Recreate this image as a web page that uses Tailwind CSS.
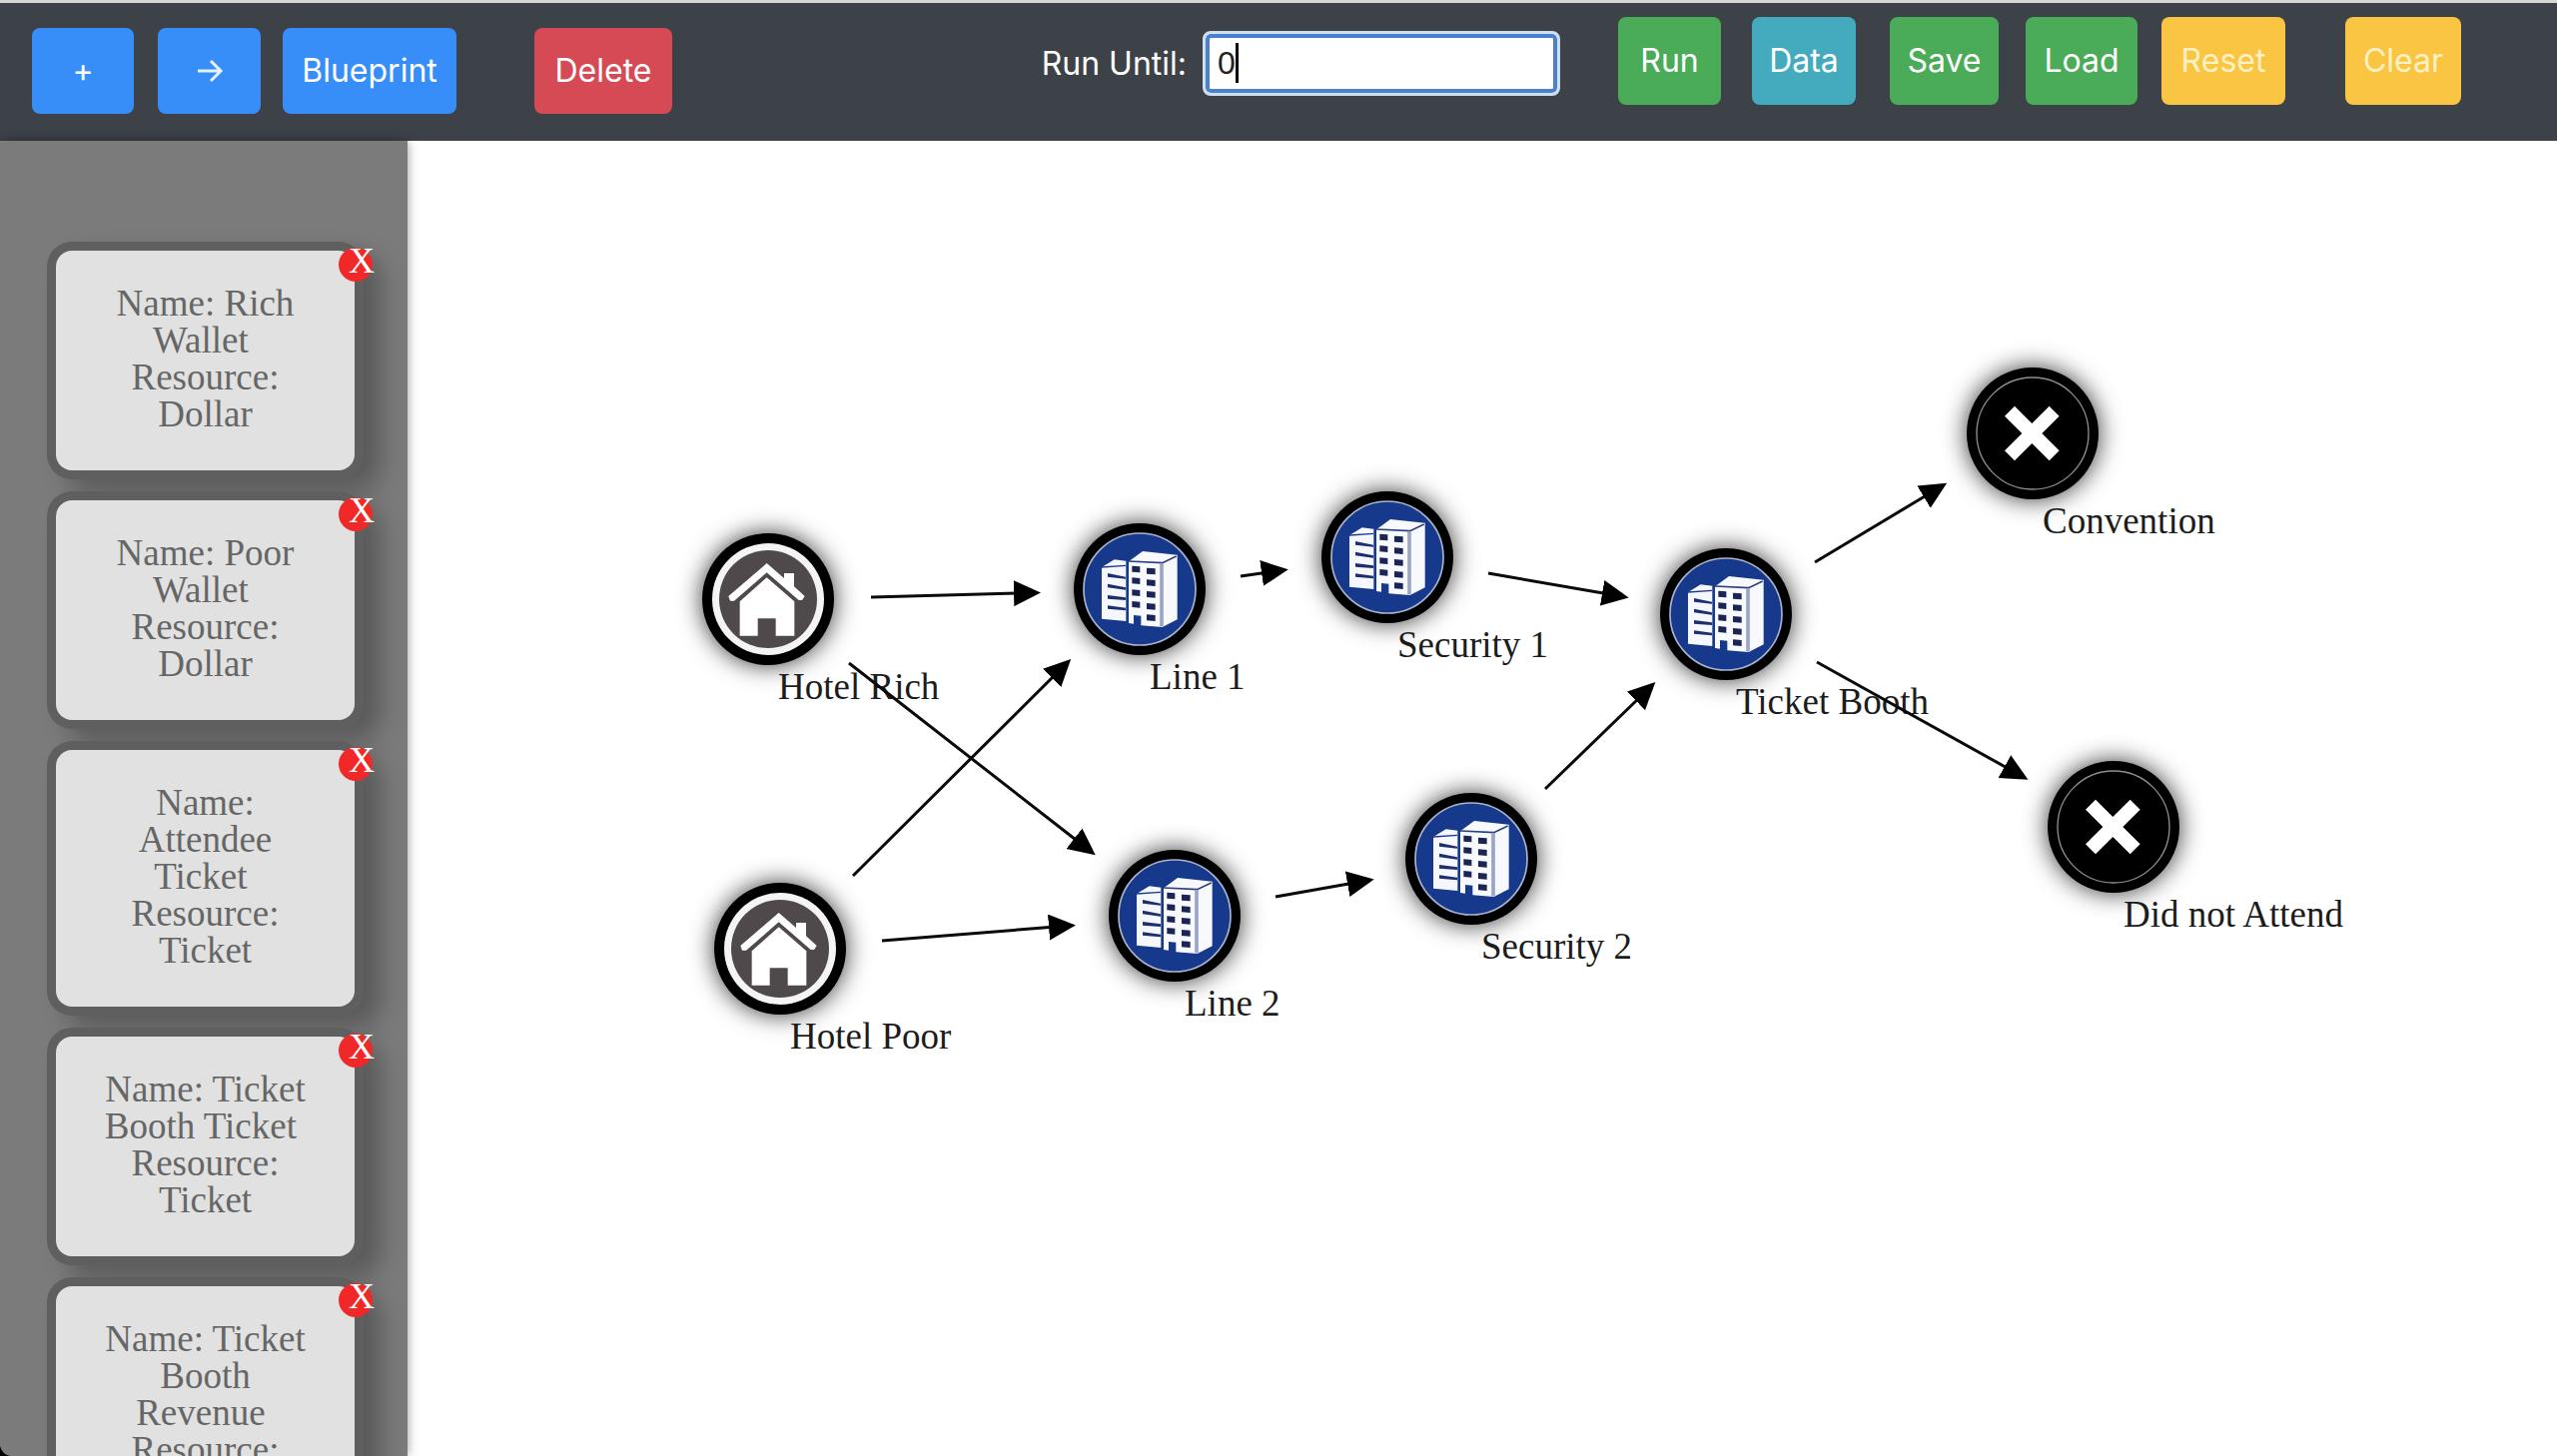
<!DOCTYPE html>
<html lang="en">
<head>
<meta charset="utf-8">
<title>Simulation Builder</title>
<script src="https://cdn.jsdelivr.net/npm/@tailwindcss/browser@4"></script>
</head>
<body class="relative flex h-screen flex-col overflow-hidden bg-white">
<svg class="hidden" aria-hidden="true">
  <symbol id="house" viewBox="0 0 396 396">
    <circle cx="198" cy="198" r="168" fill="#f4f4f4"/>
    <circle cx="198" cy="198" r="147" fill="#4f494b"/>
    <path d="M79 189L194 90L246 135V120H276V160L308 189L300 201L290 201L194 118L96 203L84 203Z" fill="#fff"/>
    <path d="M113 205L194 133L277 205V308H221V256H167V308H113Z" fill="#fff"/>
  </symbol>
  <symbol id="office" viewBox="0 0 396 396">
    <circle cx="198" cy="198" r="168" fill="#16398c" stroke="#a9b4cf" stroke-width="5"/>
    <path d="M84 132L122 109L157 113V294L84 287Z" fill="#f6f7fc"/>
    <path d="M84 132L156 127" stroke="#16398c" stroke-width="4"/>
    <path d="M102 150L156 161V167L102 161ZM102 182L156 193V200L102 193ZM102 216L156 223V231L102 227ZM102 247L156 254V262L102 257Z" fill="#1b2f70"/>
    <path d="M165 115L207 84L311 95V289L266 312L202 307V278L180 276V302L165 300Z" fill="#f8f9fd"/>
    <path d="M165 114L266 119L308 99" fill="none" stroke="#2d3f7d" stroke-width="5"/>
    <path d="M264 120V310" stroke="#9ba4c8" stroke-width="11"/>
    <path d="M175 128l24 2v18l-24-2zM175 163l24 2v18l-24-2zM175 199l24 2v18l-24-2zM175 234l24 2v18l-24-2zM219 134l26 2v18l-26-2zM219 169l26 2v18l-26-2zM219 204l26 2v18l-26-2zM219 240l26 2v18l-26-2zM219 274l26 2v18l-26-2z" fill="#1b2555"/>
  </symbol>
  <symbol id="cross" viewBox="0 0 396 396">
    <circle cx="198" cy="198" r="168" fill="#000" stroke="#8f8f8f" stroke-width="4"/>
    <path d="M144 116L196 168L248 116L278 146L226 198L278 250L248 280L196 228L144 280L114 250L166 198L114 146Z" fill="#fff"/>
  </symbol>
</svg>

<header class="flex h-[141px] shrink-0 items-start border-t-3 border-[#d6d6d6] bg-[#3d4249] pr-24 pl-8 font-['Inter',sans-serif] text-[32px] leading-10 text-white">
  <div class="mt-[25px] flex">
    <button class="h-[86px] w-[102px] rounded-lg bg-[#378ef8]" aria-label="Add node">+</button>
    <button class="ml-6 flex h-[86px] w-[103px] items-center justify-center rounded-lg bg-[#378ef8]" aria-label="Add arrow">
      <svg class="h-6 w-7" viewBox="0 0 28 24" fill="none" stroke="#e6f2ff" stroke-width="3"><path d="M2 12H25M15 2L25 12L15 22"/></svg>
    </button>
    <button class="ml-[22px] h-[86px] w-[174px] rounded-lg bg-[#378ef8]">Blueprint</button>
    <button class="ml-[78px] h-[86px] w-[138px] rounded-lg bg-[#d64a55]">Delete</button>
  </div>
  <div class="relative mt-7 ml-auto flex items-center">
    <label for="until" class="mr-4">Run Until:</label>
    <input id="until" type="text" value="0" class="h-[65px] w-[358px] rounded-lg border-3 border-[#cfdff3] bg-white px-3 font-['Liberation_Sans',sans-serif] text-[32px] text-[#222] inset-ring-4 inset-ring-[#4a81cb]">
    <span class="absolute top-3 right-[322px] h-10 w-[3px] bg-black"></span>
  </div>
  <div class="mt-3.5 ml-[58px] flex">
    <button class="h-[88px] w-[103px] rounded-lg bg-[#4aab58]">Run</button>
    <button class="ml-[31px] h-[88px] w-[104px] rounded-lg bg-[#44abbf]">Data</button>
    <button class="ml-[34px] h-[88px] w-[109px] rounded-lg bg-[#4aab58]">Save</button>
    <button class="ml-[27px] h-[88px] w-[112px] rounded-lg bg-[#4aab58]">Load</button>
    <button class="ml-6 h-[88px] w-[124px] rounded-lg bg-[#fac542] text-[#fff1c4]">Reset</button>
    <button class="ml-[60px] h-[88px] w-[116px] rounded-lg bg-[#fac542] text-[#fff1c4]">Clear</button>
  </div>
</header>

<main class="flex min-h-0 flex-1 font-['Liberation_Serif',serif] text-[37px]">
  <aside class="z-10 flex w-[408px] shrink-0 flex-col gap-[30px] overflow-hidden bg-[#7b7b7b] pt-[110px] pr-[53px] pl-14 text-center leading-[37px] text-[#666] shadow-[0_0_10px_rgba(0,0,0,0.4)]">
    <article class="relative shrink-0 rounded-2xl bg-[#e1e1e1] px-11 pt-[34px] pb-[38px] shadow-[0_0_0_9px_#5f5f5f,18px_12px_24px_8px_rgba(0,0,0,0.28)]">
      <p>Name: Rich Wallet&nbsp;<br>Resource: Dollar</p>
      <button class="absolute -top-[3px] -right-[18px] h-[34px] w-[34px] rounded-full bg-[#f02828] pl-2.5 text-[36px] leading-[26px] text-white" aria-label="Remove Rich Wallet"><span class="block h-[34px]">X</span></button>
    </article>
    <article class="relative shrink-0 rounded-2xl bg-[#e1e1e1] px-11 pt-[34px] pb-[38px] shadow-[0_0_0_9px_#5f5f5f,18px_12px_24px_8px_rgba(0,0,0,0.28)]">
      <p>Name: Poor Wallet&nbsp;<br>Resource: Dollar</p>
      <button class="absolute -top-[3px] -right-[18px] h-[34px] w-[34px] rounded-full bg-[#f02828] pl-2.5 text-[36px] leading-[26px] text-white" aria-label="Remove Poor Wallet"><span class="block h-[34px]">X</span></button>
    </article>
    <article class="relative shrink-0 rounded-2xl bg-[#e1e1e1] px-11 pt-[34px] pb-[38px] shadow-[0_0_0_9px_#5f5f5f,18px_12px_24px_8px_rgba(0,0,0,0.28)]">
      <p>Name: Attendee Ticket&nbsp;<br>Resource: Ticket</p>
      <button class="absolute -top-[3px] -right-[18px] h-[34px] w-[34px] rounded-full bg-[#f02828] pl-2.5 text-[36px] leading-[26px] text-white" aria-label="Remove Attendee Ticket"><span class="block h-[34px]">X</span></button>
    </article>
    <article class="relative shrink-0 rounded-2xl bg-[#e1e1e1] px-11 pt-[34px] pb-[38px] shadow-[0_0_0_9px_#5f5f5f,18px_12px_24px_8px_rgba(0,0,0,0.28)]">
      <p>Name: Ticket Booth Ticket&nbsp;<br>Resource: Ticket</p>
      <button class="absolute -top-[3px] -right-[18px] h-[34px] w-[34px] rounded-full bg-[#f02828] pl-2.5 text-[36px] leading-[26px] text-white" aria-label="Remove Ticket Booth Ticket"><span class="block h-[34px]">X</span></button>
    </article>
    <article class="relative shrink-0 rounded-2xl bg-[#e1e1e1] px-11 pt-[34px] pb-[38px] shadow-[0_0_0_9px_#5f5f5f,18px_12px_24px_8px_rgba(0,0,0,0.28)]">
      <p>Name: Ticket Booth Revenue&nbsp;<br>Resource: Dollar</p>
      <button class="absolute -top-[3px] -right-[18px] h-[34px] w-[34px] rounded-full bg-[#f02828] pl-2.5 text-[36px] leading-[26px] text-white" aria-label="Remove Ticket Booth Revenue"><span class="block h-[34px]">X</span></button>
    </article>
  </aside>

  <section class="relative min-w-0 flex-1 overflow-hidden bg-white leading-10 whitespace-nowrap text-[#1c1c1c]" aria-label="Flow diagram">
    <div class="absolute top-[393px] left-[295px] size-[132px] rounded-full bg-black shadow-[0_0_24px_rgba(0,0,0,0.8)]"><svg class="size-full"><use href="#house"/></svg><span class="absolute top-[134px] left-[76px]">Hotel Rich</span></div>
    <div class="absolute top-[743px] left-[307px] size-[132px] rounded-full bg-black shadow-[0_0_24px_rgba(0,0,0,0.8)]"><svg class="size-full"><use href="#house"/></svg><span class="absolute top-[134px] left-[76px]">Hotel Poor</span></div>
    <div class="absolute top-[383px] left-[667px] size-[132px] rounded-full bg-black shadow-[0_0_24px_rgba(0,0,0,0.8)]"><svg class="size-full"><use href="#office"/></svg><span class="absolute top-[134px] left-[76px]">Line 1</span></div>
    <div class="absolute top-[710px] left-[702px] size-[132px] rounded-full bg-black shadow-[0_0_24px_rgba(0,0,0,0.8)]"><svg class="size-full"><use href="#office"/></svg><span class="absolute top-[134px] left-[76px]">Line 2</span></div>
    <div class="absolute top-[351px] left-[915px] size-[132px] rounded-full bg-black shadow-[0_0_24px_rgba(0,0,0,0.8)]"><svg class="size-full"><use href="#office"/></svg><span class="absolute top-[134px] left-[76px]">Security 1</span></div>
    <div class="absolute top-[653px] left-[999px] size-[132px] rounded-full bg-black shadow-[0_0_24px_rgba(0,0,0,0.8)]"><svg class="size-full"><use href="#office"/></svg><span class="absolute top-[134px] left-[76px]">Security 2</span></div>
    <div class="absolute top-[408px] left-[1254px] size-[132px] rounded-full bg-black shadow-[0_0_24px_rgba(0,0,0,0.8)]"><svg class="size-full"><use href="#office"/></svg><span class="absolute top-[134px] left-[76px]">Ticket Booth</span></div>
    <div class="absolute top-[227px] left-[1561px] size-[132px] rounded-full bg-black shadow-[0_0_24px_rgba(0,0,0,0.8)]"><svg class="size-full"><use href="#cross"/></svg><span class="absolute top-[134px] left-[76px]">Convention</span></div>
    <div class="absolute top-[621px] left-[1642px] size-[132px] rounded-full bg-black shadow-[0_0_24px_rgba(0,0,0,0.8)]"><svg class="size-full"><use href="#cross"/></svg><span class="absolute top-[134px] left-[76px]">Did not Attend</span></div>

    <svg class="pointer-events-none absolute inset-0 size-full" stroke="#0a0a0a" stroke-width="3" aria-hidden="true">
      <defs><marker id="head" markerUnits="userSpaceOnUse" markerWidth="28" markerHeight="28" refX="7" refY="13" orient="auto"><path d="M0 0L27 13L0 26Z" fill="#000" stroke="none"/></marker></defs>
      <path marker-end="url(#head)" d="M464 457L614 453"/>
      <path marker-end="url(#head)" d="M442 523L673 703"/>
      <path marker-end="url(#head)" d="M446 736L650 533"/>
      <path marker-end="url(#head)" d="M475 801L649 787"/>
      <path marker-end="url(#head)" d="M834 436L862 432"/>
      <path marker-end="url(#head)" d="M1082 433L1203 454"/>
      <path marker-end="url(#head)" d="M869 757L948 743"/>
      <path marker-end="url(#head)" d="M1139 649L1235 556"/>
      <path marker-end="url(#head)" d="M1409 422L1524 353"/>
      <path marker-end="url(#head)" d="M1411 522L1605 630"/>
    </svg>
  </section>
</main>
<svg class="absolute bottom-0 left-0 z-20 size-2.5" viewBox="0 0 10 10" aria-hidden="true"><path d="M0 0Q2 8 10 10H0Z"/></svg>
</body>
</html>
